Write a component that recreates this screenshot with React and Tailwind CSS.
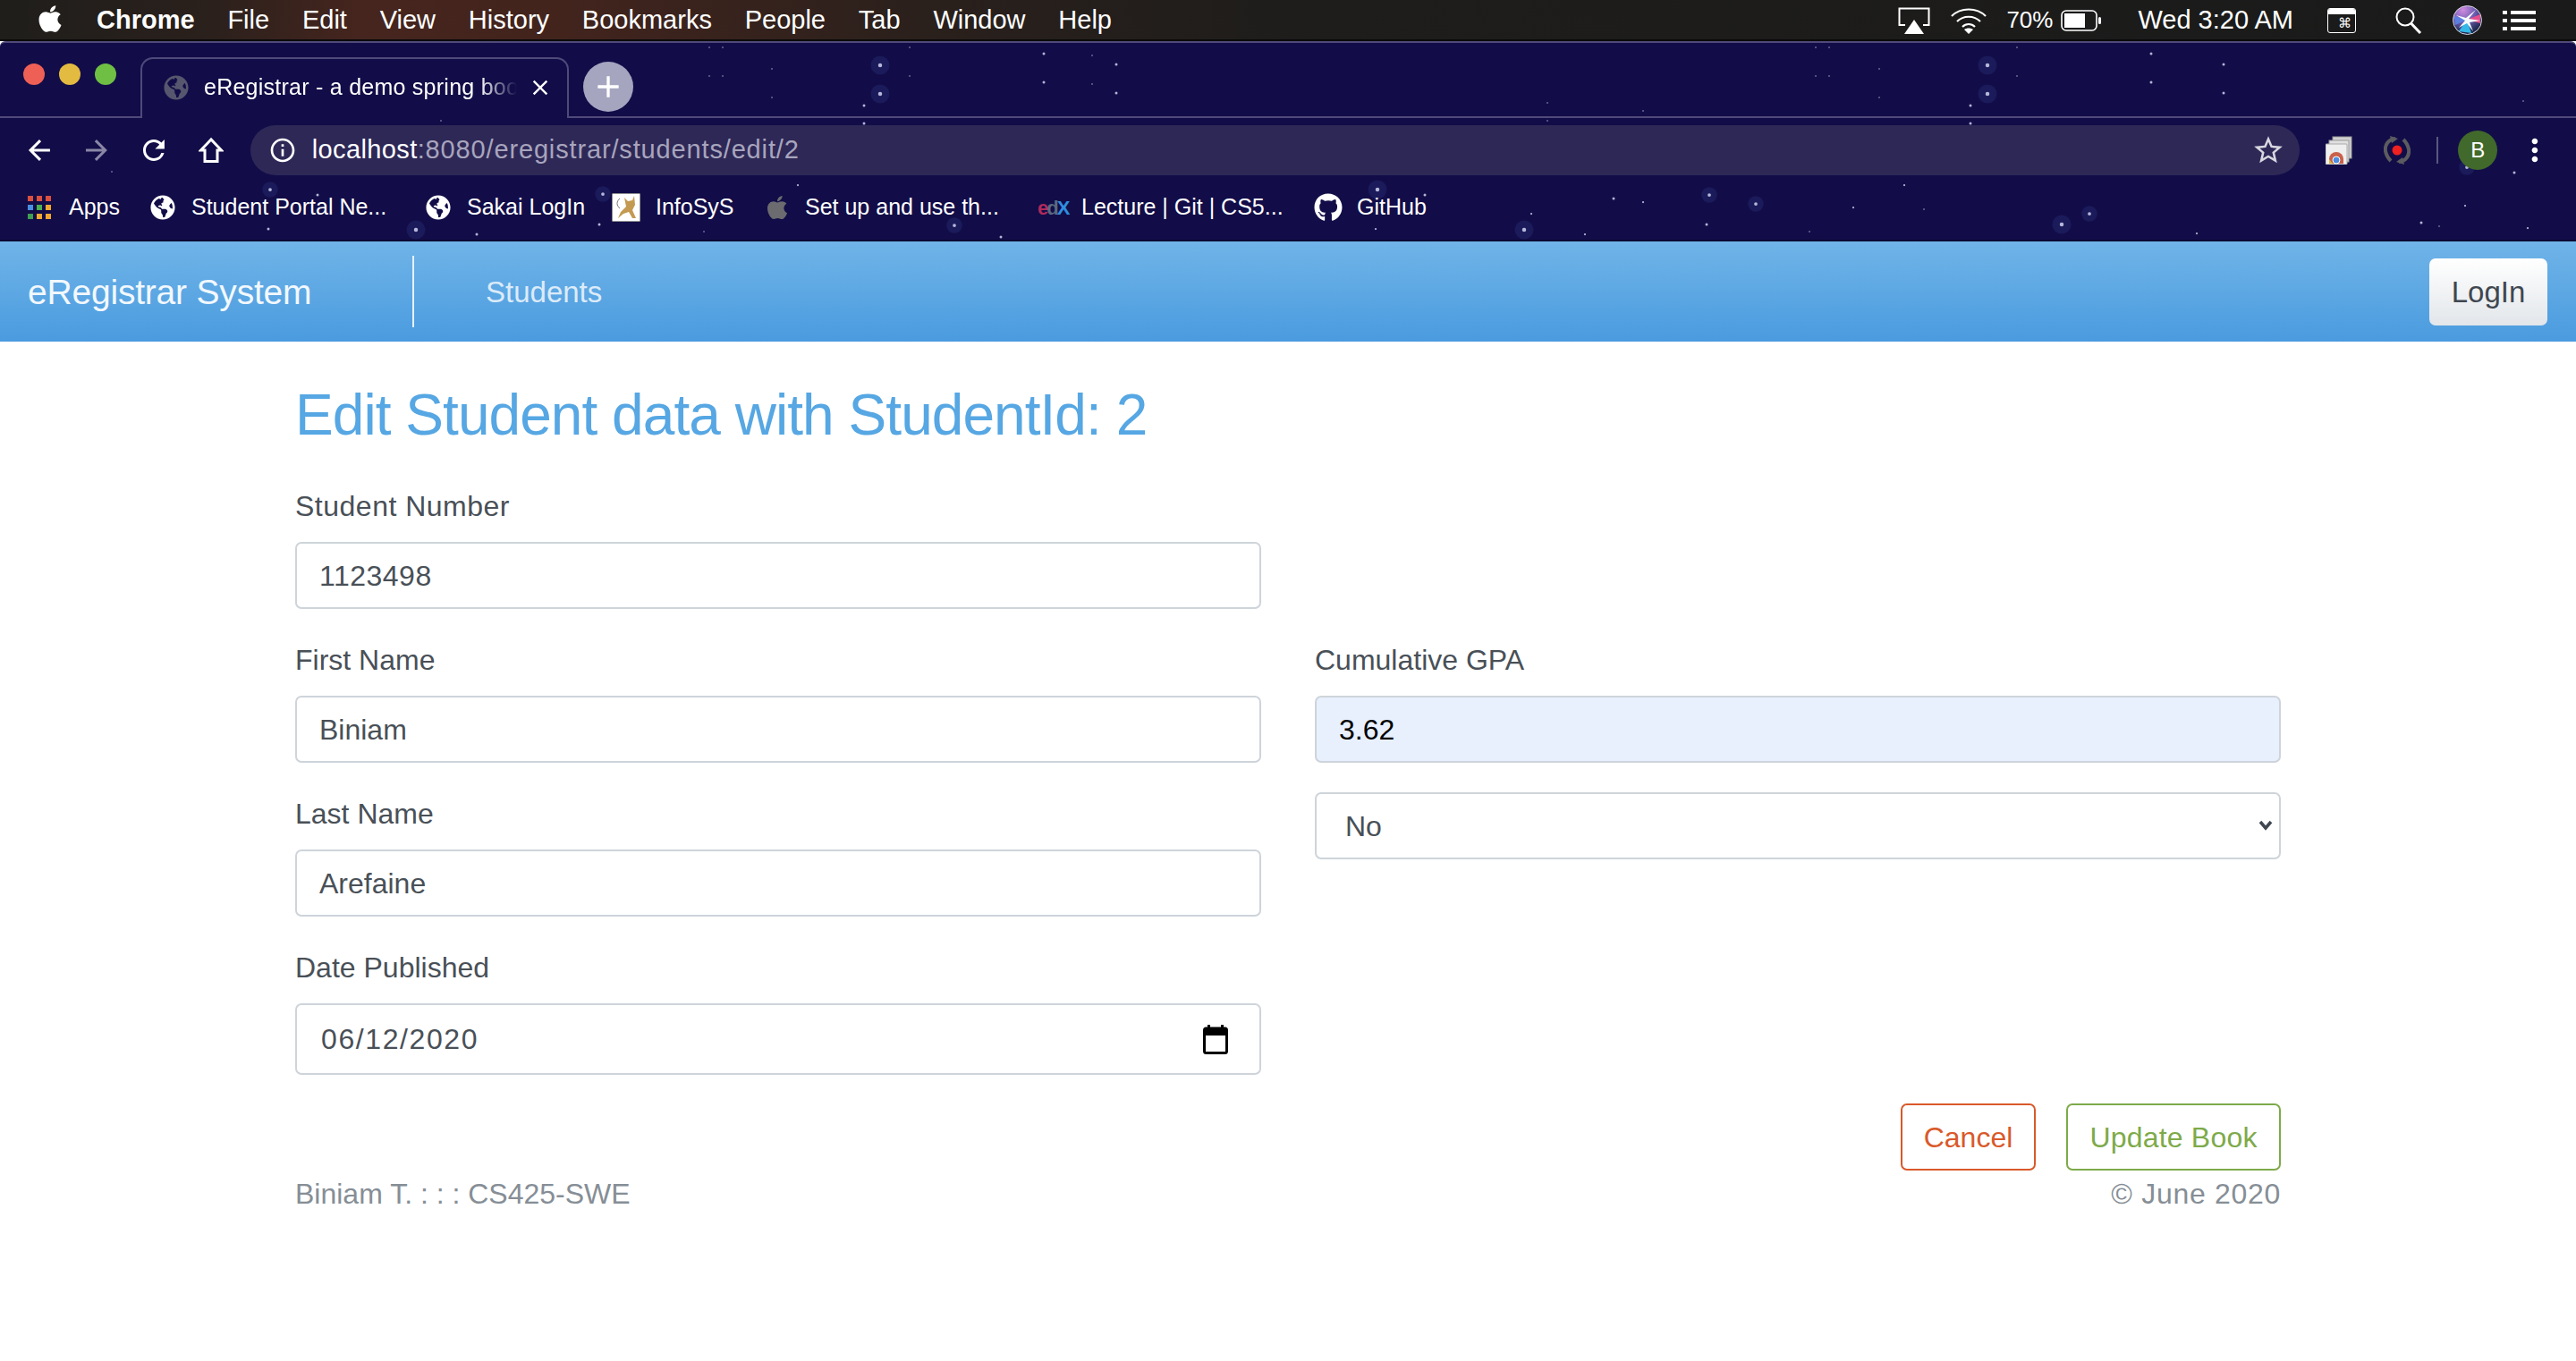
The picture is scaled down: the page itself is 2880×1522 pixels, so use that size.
import { FaApple, FaGithub, FaGlobeAmericas } from 'react-icons/fa';
import {
  MdArrowBack,
  MdArrowForward,
  MdRefresh,
  MdInfoOutline,
  MdStarBorder,
  MdMoreVert,
  MdClose,
  MdAdd,
} from 'react-icons/md';

// stars of the browser theme: [x, y, r]
const STARS = [
  [493, 135, 1], [302, 212, 2.5], [355, 218, 2], [674, 217, 2.5], [465, 257, 3], [300, 256, 2], [533, 262, 2],
  [670, 251, 2], [892, 207, 1.5], [787, 259, 1], [125, 192, 1], [793, 53, 1], [808, 53, 1], [863, 77, 1],
  [793, 85, 1], [808, 85, 1], [863, 109, 1], [984, 73, 3], [984, 105, 3], [1167, 60, 2], [1221, 62, 1],
  [1248, 72, 2], [1167, 92, 2], [1221, 94, 1], [1248, 104, 2], [966, 118, 2], [966, 138, 2], [1540, 212, 3],
  [1593, 218, 2], [1804, 222, 2], [1837, 226, 1.5], [1911, 218, 2.5], [1908, 251, 2], [1067, 252, 2.5],
  [1119, 265, 2], [1712, 239, 1.5], [1704, 257, 3], [1538, 256, 1.5], [1772, 262, 1.5], [1730, 115, 1],
  [1837, 124, 1], [1730, 135, 1], [1017, 53, 1], [1017, 85, 1], [2222, 73, 3], [2222, 105, 3], [2405, 60, 2],
  [2486, 72, 2], [2405, 92, 2], [2486, 104, 2], [2203, 118, 2], [2203, 138, 2], [2129, 207, 1.5], [1963, 228, 2.5],
  [2072, 232, 1.5], [2151, 234, 1], [2305, 251, 3], [2336, 239, 2.5], [2456, 261, 1.5], [2023, 259, 1],
  [2707, 249, 2], [2727, 253, 1], [2756, 230, 1.5], [2826, 255, 1.5], [2811, 193, 2], [2758, 187, 2.5],
  [2821, 113, 1], [2101, 77, 1], [2101, 109, 1], [2030, 53, 1], [2045, 53, 1], [2255, 53, 1], [2030, 85, 1],
  [2045, 85, 1], [2255, 85, 1],
];

function AirplayIcon() {
  return (
    <svg width="36" height="30" viewBox="0 0 36 30" fill="none">
      <path d="M8 20H1.500V1.500h33V20H28" stroke="#fff" strokeWidth="2" />
      <path d="M18 14l11 16H7z" fill="#fff" />
    </svg>
  );
}

function WifiIcon() {
  return (
    <svg width="42" height="30" viewBox="0 0 42 30" fill="none" stroke="#fff" strokeWidth="2.2">
      <path d="M2 10C12 0 30 0 40 10" />
      <path d="M8 16c7-7 19-7 26 0" />
      <path d="M14 22c4-4 10-4 14 0" />
      <path d="M21 30l-5-5c3-2 7-2 10 0z" fill="#fff" stroke="none" />
    </svg>
  );
}

function BatteryIcon() {
  return (
    <svg width="46" height="24" viewBox="0 0 46 24">
      <rect x="1" y="1" width="39" height="22" rx="5" fill="none" stroke="#fff" strokeWidth="1.6" />
      <rect x="4" y="4" width="23" height="16" fill="#fff" />
      <rect x="42" y="8" width="3" height="8" rx="1.5" fill="#fff" />
    </svg>
  );
}

function CmdIcon() {
  return (
    <div className="w-[32px] h-[28px] rounded-[3px] border border-white flex flex-col overflow-hidden">
      <div className="h-[6px] bg-white" />
      <div className="flex-1 flex items-center justify-center text-white text-[15px] leading-none pl-[6px]">⌘</div>
    </div>
  );
}

function SearchIcon() {
  return (
    <svg width="30" height="30" viewBox="0 0 30 30" fill="none" stroke="#fff">
      <circle cx="11" cy="11" r="9.500" strokeWidth="2" />
      <path d="M17.500 18l10.500 11" strokeWidth="3" />
    </svg>
  );
}

function SiriIcon() {
  return (
    <svg width="33" height="33" viewBox="0 0 33 33">
      <defs>
        <radialGradient id="siriPurple" cx="0.35" cy="0.15" r="0.8">
          <stop offset="0" stopColor="#d08be0" />
          <stop offset="0.55" stopColor="#6a5bb0" />
          <stop offset="1" stopColor="#1f2a50" />
        </radialGradient>
      </defs>
      <circle cx="16.5" cy="16.5" r="16" fill="url(#siriPurple)" stroke="#d8d8e0" strokeWidth="1" />
      <path d="M16 16L31 10 31 20z" fill="#e34f8f" />
      <path d="M16 16L7 29 21 31z" fill="#34b8e8" />
      <path d="M16 16L2 12 3 22z" fill="#5b7fe0" />
      <path d="M26 5L18 15 31 17 19 19 23 29 16 20 7 25 14 17 4 11 15 14z" fill="#f4fbff" />
    </svg>
  );
}

function ListIcon() {
  return (
    <svg width="37" height="22" viewBox="0 0 37 22" fill="#fff">
      <rect x="0" y="0" width="5" height="4" />
      <rect x="9" y="0" width="28" height="4" />
      <rect x="0" y="9" width="5" height="4" />
      <rect x="9" y="9" width="28" height="4" />
      <rect x="0" y="18" width="5" height="4" />
      <rect x="9" y="18" width="28" height="4" />
    </svg>
  );
}

function HomeIcon() {
  return (
    <svg width="28" height="30" viewBox="0 0 28 30" fill="none" stroke="#fff" strokeWidth="3" strokeLinejoin="miter">
      <path d="M14 3L2.500 15H7v12.500h14V15h4.500z" />
    </svg>
  );
}

function AppsIcon() {
  const colors = ['#d9503f', '#d9503f', '#d9503f', '#4a8fe0', '#4caf50', '#f0a830', '#3f9e50', '#f0a830', '#f0a830'];
  return (
    <div className="grid grid-cols-3 gap-[4px] w-[26px]">
      {colors.map((c, i) => (
        <svg key={i} width="6" height="6">
          <rect width="6" height="6" fill={c} />
        </svg>
      ))}
    </div>
  );
}

function TomcatIcon() {
  return (
    <svg width="32" height="32" viewBox="0 0 32 32">
      <rect width="32" height="32" fill="#fff" stroke="#222" />
      <path d="M14 5l4 4 5-1 2-5 1 10-3 6 4 9h-4l-4-7-6 2-6 5 3-7 6-6z" fill="#c49a52" />
      <path d="M9 6c-4 3-4 8 0 11" fill="none" stroke="#777" />
    </svg>
  );
}

function ChromeStoreIcon() {
  return (
    <svg width="30" height="32" viewBox="0 0 30 32">
      <rect x="8" y="1" width="21" height="24" fill="#d0d0d0" stroke="#9a9a9a" />
      <rect x="4" y="5" width="22" height="24" fill="#e0e0e0" stroke="#9a9a9a" />
      <rect x="0" y="9" width="24" height="23" rx="1" fill="#efefef" stroke="#aaa" />
      <path d="M4 31v-5a8 8 0 0 1 16 0v5z" fill="#c9604a" />
      <path d="M4 31v-5l4 5z" fill="#d9b840" />
      <circle cx="12" cy="27" r="4" fill="#4a8fe0" stroke="#fff" />
    </svg>
  );
}

function RecorderIcon() {
  return (
    <svg width="30" height="32" viewBox="0 0 30 32" fill="none">
      <path d="M13 3C5 4 1 10 2 17c1 5 3 8 6 11" stroke="#5b5b60" strokeWidth="4" />
      <path d="M17 29c8-1 12-7 11-14-1-5-3-8-6-11" stroke="#5b5b60" strokeWidth="4" />
      <path d="M7 0l9 3-7 5z" fill="#5b5b60" />
      <path d="M23 32l-9-3 7-5z" fill="#5b5b60" />
      <circle cx="15" cy="16" r="5.500" fill="#ee2020" />
    </svg>
  );
}

function CalendarIcon() {
  return (
    <svg width="28" height="33" viewBox="0 0 28 33">
      <rect x="1.500" y="4" width="25" height="27.500" rx="2" fill="#fff" stroke="#000" strokeWidth="3" />
      <rect x="1" y="4" width="26" height="8" fill="#000" />
      <rect x="5" y="0" width="3" height="5" fill="#000" />
      <rect x="20" y="0" width="3" height="5" fill="#000" />
    </svg>
  );
}

function Field({ label, value, spaced }) {
  return (
    <div className="mb-[32px]">
      <label className={`block h-[48px] leading-[50px] mb-[17px] text-[32px] text-[#495057] ${spaced ? 'tracking-[0.5px]' : ''}`}>
        {label}
      </label>
      <input
        readOnly
        defaultValue={value}
        className={`block w-full h-[75px] px-[25px] pt-[2px] text-[32px] text-[#495057] bg-white border-2 border-[#ced4da] rounded-[7px] outline-none ${spaced ? 'tracking-[0.5px]' : ''}`}
      />
    </div>
  );
}

export default function App() {
  return (
    <div className="min-h-screen bg-white [font-family:'Liberation_Sans',sans-serif]">
      {/* mac menu bar */}
      <div className="h-[46px] flex items-center justify-between pl-[41px] pr-[45px] pt-[1px] text-white text-[29px] border-b-2 border-[#0a0a0a] bg-[linear-gradient(90deg,#1f1e1b_0%,#2a201c_8%,#46251e_14%,#42241d_22%,#2a201c_36%,#1e1d1b_50%,#1a1a1a_100%)]">
        <div className="flex items-center">
          <FaApple className="w-[30px] h-[34px] mr-[37px] -mt-[3px]" />
          <div className="flex items-center gap-[36.8px]">
            <span className="font-bold">Chrome</span>
            <span>File</span>
            <span>Edit</span>
            <span>View</span>
            <span>History</span>
            <span>Bookmarks</span>
            <span>People</span>
            <span>Tab</span>
            <span>Window</span>
            <span>Help</span>
          </div>
        </div>
        <div className="flex items-center">
          <AirplayIcon />
          <div className="ml-[22px]">
            <WifiIcon />
          </div>
          <span className="ml-[21px] text-[26px]">70%</span>
          <div className="ml-[9px]">
            <BatteryIcon />
          </div>
          <span className="ml-[40px]">Wed 3:20 AM</span>
          <div className="ml-[38px]">
            <CmdIcon />
          </div>
          <div className="ml-[44px]">
            <SearchIcon />
          </div>
          <div className="ml-[34px]">
            <SiriIcon />
          </div>
          <div className="ml-[23px]">
            <ListIcon />
          </div>
        </div>
      </div>

      {/* browser chrome */}
      <div className="relative h-[224px] bg-[#120d48] border-t-2 border-[#4f4a7a] rounded-t-[6px] border-b-2 border-b-[#0c0933]">
        <svg className="absolute -top-[48px] left-0 pointer-events-none" width="2880" height="270">
          {STARS.map(([x, y, r], i) => (
            <g key={i}>
              {r >= 2.5 && <circle cx={x} cy={y} r={r * 3.5} fill="#3c4aa0" opacity="0.22" />}
              <circle cx={x} cy={y} r={r * 0.75} fill="#d0d4ee" opacity="0.85" />
            </g>
          ))}
        </svg>

        {/* tabs row */}
        <div className="relative h-[84px] flex items-end border-b-2 border-[#4f4a7a] pl-[26px]">
          <div className="self-center flex items-center gap-[16px] w-[131px] -mt-[12px]">
            <div className="w-[24px] h-[24px] rounded-full bg-[#ee6055]" />
            <div className="w-[24px] h-[24px] rounded-full bg-[#e3bb41]" />
            <div className="w-[24px] h-[24px] rounded-full bg-[#6fbf44]" />
          </div>
          <div className="relative -mb-[2px] h-[68px] w-[479px] flex items-center pl-[24px] pb-[2px] bg-[#120d48] border-2 border-b-0 border-[#4f4a7a] rounded-t-[14px] text-white text-[25px]">
            <FaGlobeAmericas className="w-[28px] h-[28px] text-[#56566e] shrink-0" />
            <span className="ml-[17px] w-[350px] overflow-hidden whitespace-nowrap tracking-[0.25px] [mask-image:linear-gradient(90deg,#000_88%,transparent)]">
              eRegistrar - a demo spring boot app
            </span>
            <MdClose className="ml-[12px] w-[28px] h-[28px]" />
          </div>
          <div className="self-center -mb-[16px] ml-[16px] w-[56px] h-[56px] rounded-full bg-[#a5a5c0] flex items-center justify-center">
            <MdAdd className="w-[40px] h-[40px] text-white" />
          </div>
        </div>

        {/* address row */}
        <div className="relative h-[64px] pt-[8px] flex items-center pl-[26px] pr-[26px] text-white">
          <MdArrowBack className="w-[36px] h-[36px]" />
          <MdArrowForward className="ml-[28px] w-[36px] h-[36px] text-[#8a87a6]" />
          <MdRefresh className="ml-[28px] w-[36px] h-[36px]" />
          <div className="ml-[32px]">
            <HomeIcon />
          </div>
          <div className="ml-[30px] w-[2300px] h-[56px] rounded-[28px] bg-[#2e2857] flex items-center pl-[20px] pr-[16px]">
            <MdInfoOutline className="w-[32px] h-[32px]" />
            <span className="ml-[17px] text-[29px] tracking-[0.4px]">
              localhost<span className="text-[#a8a5bd] tracking-[0.85px]">:8080/eregistrar/students/edit/2</span>
            </span>
            <MdStarBorder className="ml-auto w-[38px] h-[38px] text-[#d8d7e0]" />
          </div>
          <div className="ml-[29px]">
            <ChromeStoreIcon />
          </div>
          <div className="ml-[35px]">
            <RecorderIcon />
          </div>
          <div className="ml-[29px] w-[2px] h-[30px] bg-[#5a5680]" />
          <div className="ml-[22px] w-[44px] h-[44px] rounded-full bg-[#41692b] flex items-center justify-center text-[24px]">
            B
          </div>
          <MdMoreVert className="ml-[22px] w-[40px] h-[40px]" />
        </div>

        {/* bookmarks row */}
        <div className="relative h-[70px] pt-[2px] flex items-center pl-[31px] text-white text-[25px] whitespace-nowrap">
          <AppsIcon />
          <span className="ml-[20px] w-[57px]">Apps</span>
          <FaGlobeAmericas className="ml-[34px] w-[28px] h-[28px]" />
          <span className="ml-[18px] w-[220px]">Student Portal Ne...</span>
          <FaGlobeAmericas className="ml-[42px] w-[28px] h-[28px]" />
          <span className="ml-[18px] w-[130px]">Sakai LogIn</span>
          <div className="ml-[32px]">
            <TomcatIcon />
          </div>
          <span className="ml-[17px] w-[85px]">InfoSyS</span>
          <FaApple className="ml-[38px] w-[26px] h-[30px] text-[#6b6b70]" />
          <span className="ml-[18px] w-[217px]">Set up and use th...</span>
          <span className="ml-[43px] w-[34px] text-[22px] font-bold tracking-[-2px]">
            <span className="text-[#b02a5b]">e</span>
            <span className="text-[#5a6a80]">d</span>
            <span className="text-[#2f8ee0]">X</span>
          </span>
          <span className="ml-[15px] w-[227px]">Lecture | Git | CS5...</span>
          <FaGithub className="ml-[33px] w-[32px] h-[32px]" />
          <span className="ml-[16px]">GitHub</span>
        </div>
      </div>

      {/* app navbar */}
      <div className="h-[112px] flex items-center pl-[31px] pr-[32px] pt-[2px] bg-[linear-gradient(180deg,#70b4e8,#4a9bdf)]">
        <span className="w-[430px] text-[39px] text-[#f2f8fd] tracking-[-0.2px]">eRegistrar System</span>
        <div className="w-[2px] h-[80px] -mt-[2px] bg-[#e6f1fa]" />
        <span className="ml-[80px] text-[33px] text-[#dcebf8]">Students</span>
        <button className="ml-auto -mt-[2px] w-[132px] h-[75px] pt-[2px] rounded-[7px] bg-[linear-gradient(180deg,#ffffff,#e2e6ea)] text-[33px] text-[#3f4750]">
          LogIn
        </button>
      </div>

      {/* form */}
      <div className="px-[330px] pt-[44px]">
        <h3 className="h-[77px] leading-[77px] mb-[38px] text-[64px] text-[#56a7e3] tracking-[-0.95px]">Edit Student data with StudentId: 2</h3>

        <div className="grid grid-cols-2 gap-x-[60px]">
          <div>
            <Field label="Student Number" value="1123498" spaced />
            <Field label="First Name" value="Biniam" />
            <Field label="Last Name" value="Arefaine" />
            <div className="mb-[32px]">
              <label className="block h-[48px] leading-[50px] mb-[17px] text-[32px] text-[#495057]">Date Published</label>
              <div className="h-[80px] flex items-center pl-[27px] pr-[35px] border-2 border-[#ced4da] rounded-[7px]">
                <span className="text-[32px] text-[#495057] tracking-[1.6px]">06/12/2020</span>
                <div className="ml-auto">
                  <CalendarIcon />
                </div>
              </div>
            </div>
          </div>

          <div className="pt-[172px]">
            <label className="block h-[48px] leading-[50px] mb-[17px] text-[32px] text-[#495057]">Cumulative GPA</label>
            <input
              readOnly
              defaultValue="3.62"
              className="block w-full h-[75px] px-[25px] pt-[2px] text-[32px] text-black bg-[#e8f0fe] border-2 border-[#ced4da] rounded-[7px] outline-none"
            />
            <div className="relative mt-[33px]">
              <select
                defaultValue="No"
                className="block w-full h-[75px] pl-[32px] pt-[1px] text-[32px] text-[#495057] bg-white border-2 border-[#ced4da] rounded-[7px] outline-none appearance-none"
              >
                <option>No</option>
                <option>Yes</option>
              </select>
              <svg className="absolute right-[9px] top-[31px] pointer-events-none" width="16" height="12" viewBox="0 0 16 12" fill="none">
                <path d="M2 2l6 7 6-7" stroke="#3f4750" strokeWidth="3.500" />
              </svg>
            </div>
          </div>
        </div>

        <div className="flex justify-end gap-[34px]">
          <button className="w-[151px] h-[75px] border-2 border-[#d9592a] rounded-[7px] text-[32px] text-[#d9592a]">Cancel</button>
          <button className="w-[240px] h-[75px] border-2 border-[#7eaa4a] rounded-[7px] text-[32px] text-[#7eaa4a] tracking-[0.2px]">Update Book</button>
        </div>

        <div className="flex justify-between h-[48px] leading-[48px] mt-[2px] text-[32px] text-[#868e96]">
          <span>Biniam T. : : : CS425-SWE</span>
          <span className="tracking-[0.7px]">© June 2020</span>
        </div>
      </div>
    </div>
  );
}
